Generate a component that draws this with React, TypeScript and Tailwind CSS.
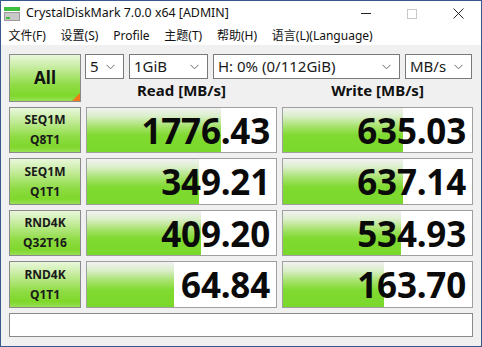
import React from 'react';

interface Result {
  name: string;
  sub: string;
  read: string;
  write: string;
  readBar: number;
  writeBar: number;
}

const results: Result[] = [
  { name: 'SEQ1M', sub: 'Q8T1', read: '1776.43', write: '635.03', readBar: 134, writeBar: 120 },
  { name: 'SEQ1M', sub: 'Q1T1', read: '349.21', write: '637.14', readBar: 112, writeBar: 120 },
  { name: 'RND4K', sub: 'Q32T16', read: '409.20', write: '534.93', readBar: 114, writeBar: 118 },
  { name: 'RND4K', sub: 'Q1T1', read: '64.84', write: '163.70', readBar: 87, writeBar: 101 },
];

const menus = ['文件(F)', '设置(S)', 'Profile', '主题(T)', '帮助(H)', '语言(L)(Language)'];

const Chevron = () => (
  <svg width="9" height="6" viewBox="0 0 9 6" fill="none" stroke="#6b6b6b" strokeWidth="1">
    <polyline points="0.5,0.8 4.5,4.8 8.5,0.8" />
  </svg>
);

const Select: React.FC<{ value: string; width: string }> = ({ value, width }) => (
  <div className={`${width} h-[25px] flex items-center justify-between bg-white border border-[#7a7a7a] pl-[4px] pr-[8px] text-[15px] text-[#1a1a1a]`}>
    <span className="leading-none">{value}</span>
    <Chevron />
  </div>
);

const greenBtn =
  'border border-[#8a8a8a] bg-[linear-gradient(to_bottom,#e9f7dc_0%,#c2eb98_30%,#8fdc45_65%,#7fd72b_88%,#97e055_100%)]';

const Cell: React.FC<{ value: string; bar: number }> = ({ value, bar }) => (
  <div className="relative border border-[#a0a0a0] bg-white flex items-center justify-end pr-[6px] overflow-hidden">
    <div
      className="absolute left-0 top-0 bottom-0 bg-[linear-gradient(to_bottom,#f2f2f2_0%,#dcefcc_18%,#a6e26c_42%,#80da31_62%,#7ad82b_100%)]"
      style={{ width: bar }}
    />
    <span className="relative text-[35px] font-bold leading-none text-[#0a0a0a] tracking-[-0.2px]">{value}</span>
  </div>
);

export default function App() {
  return (
    <div
      className="w-[482px] h-[347px] border border-[#34598a] flex flex-col bg-[#f0f0f0]"
      style={{ fontFamily: '"Noto Sans", "Noto Sans CJK SC", sans-serif' }}
    >
      <div className="h-[25px] bg-white flex items-center shrink-0">
        <svg width="16" height="14" viewBox="0 0 16 14" className="ml-[3px] mr-[6px]">
          <rect x="0" y="0" width="16" height="4" fill="#3fbf3f" />
          <rect x="0" y="5" width="16" height="9" fill="#9a9a9a" />
          <rect x="1" y="6" width="14" height="7" fill="#c8c8c8" />
          <rect x="2" y="10" width="4" height="2" fill="#3fbf3f" />
        </svg>
        <span className="text-[12.4px] text-[#111]">CrystalDiskMark 7.0.0 x64 [ADMIN]</span>
        <div className="ml-auto flex items-center h-full">
          <div className="w-[46px] h-full flex items-center justify-center">
            <div className="w-[10px] h-px bg-[#222]" />
          </div>
          <div className="w-[46px] h-full flex items-center justify-center">
            <div className="w-[10px] h-[10px] border border-[#c8c8c8]" />
          </div>
          <div className="w-[46px] h-full flex items-center justify-center">
            <svg width="11" height="11" viewBox="0 0 11 11" stroke="#222" strokeWidth="1">
              <line x1="0.5" y1="0.5" x2="10.5" y2="10.5" />
              <line x1="10.5" y1="0.5" x2="0.5" y2="10.5" />
            </svg>
          </div>
        </div>
      </div>

      <div className="h-[19px] bg-white flex items-center shrink-0">
        {menus.map((m) => (
          <span key={m} className="px-[7.4px] text-[12px] text-[#111] leading-none">
            {m}
          </span>
        ))}
      </div>

      <div className="flex-1 pl-[8px] pt-[9px]">
        <div className="grid grid-cols-[72px_191px_191px] grid-rows-[48px_46px_47px_46px_47px] gap-[5px]">
          <div className={`relative ${greenBtn} flex items-center justify-center`}>
            <span className="text-[17px] font-bold text-[#111]">All</span>
            <div className="absolute right-0 bottom-0 w-0 h-0 border-l-[8px] border-l-transparent border-b-[8px] border-b-[#f07818]" />
          </div>
          <div className="col-span-2 flex flex-col -ml-px">
            <div className="flex gap-[5px]">
              <Select value="5" width="w-[39px]" />
              <Select value="1GiB" width="w-[79px]" />
              <Select value="H: 0% (0/112GiB)" width="w-[187px]" />
              <Select value="MB/s" width="w-[67px]" />
            </div>
            <div className="flex-1 grid grid-cols-2 gap-[5px] ml-px">
              <div className="flex items-center justify-center text-[15px] font-bold text-[#111]">Read [MB/s]</div>
              <div className="flex items-center justify-center text-[15px] font-bold text-[#111]">Write [MB/s]</div>
            </div>
          </div>

          {results.map((r, i) => (
            <React.Fragment key={i}>
              <div className={`${greenBtn} flex flex-col items-center justify-center text-[12px] font-bold leading-[20px] text-[#1a1a1a]`}>
                <span>{r.name}</span>
                <span>{r.sub}</span>
              </div>
              <Cell value={r.read} bar={r.readBar} />
              <Cell value={r.write} bar={r.writeBar} />
            </React.Fragment>
          ))}
        </div>
        <div className="mt-[5px] w-[464px] h-[24px] bg-white border border-[#8a8a8a]" />
      </div>
    </div>
  );
}
